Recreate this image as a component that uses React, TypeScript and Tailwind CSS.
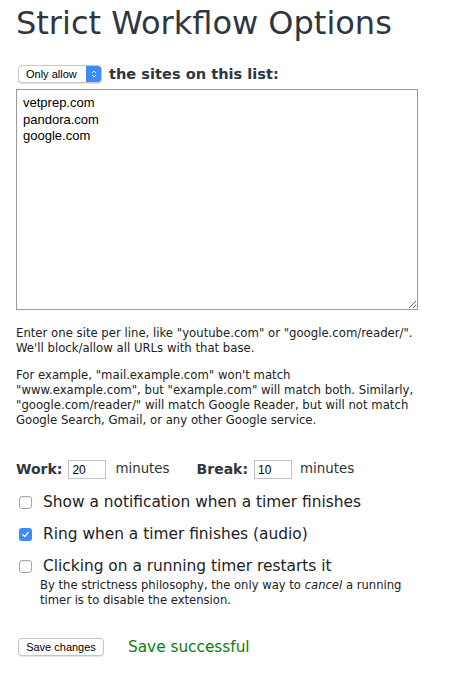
import React from 'react';

const sites = ['vetprep.com', 'pandora.com', 'google.com'];

const Checkbox = ({ checked }: { checked?: boolean }) =>
  checked ? (
    <span className="flex h-[13px] w-[13px] items-center justify-center rounded-[3px] bg-[#3b8cf5]">
      <svg viewBox="0 0 12 12" className="h-[9px] w-[9px]">
        <path d="M2.5 6.3 L5 8.8 L9.6 3.2" fill="none" stroke="#fff" strokeWidth="1.8" strokeLinecap="round" strokeLinejoin="round" />
      </svg>
    </span>
  ) : (
    <span className="block h-[13px] w-[13px] rounded-[3px] border border-[#a9a9a9] bg-white shadow-[inset_0_1px_1px_rgba(0,0,0,0.08)]" />
  );

const NumberBox = ({ value }: { value: string }) => (
  <span className="flex h-[19px] w-[38px] items-center border border-[#c3c3c3] bg-white pl-[3px] font-['Liberation_Sans',sans-serif] text-[12px] text-black">
    {value}
  </span>
);

export default function App() {
  return (
    <div className="min-h-[673px] bg-white px-4 font-['DejaVu_Sans',sans-serif] text-[#222]">
      <h1 className="pt-[3px] text-[32px] leading-[40px] font-normal text-[#2f3640]">
        Strict Workflow Options
      </h1>

      {/* block / allow list */}
      <div className="mt-[22px] flex items-center gap-[7px] pl-[2px]">
        <div className="flex h-[18px] w-[84px] items-center justify-between overflow-hidden rounded-[4px] border border-[#c8c8c8] bg-white shadow-[0_1px_1px_rgba(0,0,0,0.12)]">
          <span className="pl-[7px] font-['Liberation_Sans',sans-serif] text-[11px] text-black">Only allow</span>
          <span className="flex h-full w-[15px] items-center justify-center bg-[#3b8cf5]">
            <svg viewBox="0 0 8 12" className="h-[10px] w-[6px]">
              <path d="M1.5 4.5 L4 2 L6.5 4.5 M1.5 7.5 L4 10 L6.5 7.5" fill="none" stroke="#fff" strokeWidth="1.3" />
            </svg>
          </span>
        </div>
        <span className="text-[14.6px] leading-[18px] font-bold text-[#2f3640]">the sites on this list:</span>
      </div>

      <textarea
        readOnly
        defaultValue={sites.join('\n')}
        className="mt-[6px] block h-[221px] w-[402px] border border-[#9a9a9a] bg-white px-[6px] py-[5px] font-['Liberation_Sans',sans-serif] text-[13px] leading-[16.5px] text-black outline-none"
      />

      <div className="mt-[16px] text-[11.7px] leading-[15px] text-[#222]">
        <p>
          Enter one site per line, like "youtube.com" or "google.com/reader/".
          <br />
          We'll block/allow all URLs with that base.
        </p>
        <p className="mt-[12px]">
          For example, "mail.example.com" won't match
          <br />
          "www.example.com", but "example.com" will match both. Similarly,
          <br />
          "google.com/reader/" will match Google Reader, but will not match
          <br />
          Google Search, Gmail, or any other Google service.
        </p>
      </div>

      {/* timers */}
      <div className="mt-[31px] flex items-center text-[13.4px] text-[#333]">
        <span className="mr-[6px] text-[14px] font-bold text-[#2f3640]">Work:</span>
        <NumberBox value="20" />
        <span className="ml-[9px]">minutes</span>
        <span className="mr-[6px] ml-[27px] text-[14px] font-bold text-[#2f3640]">Break:</span>
        <NumberBox value="10" />
        <span className="ml-[8px]">minutes</span>
      </div>

      <div className="mt-[13px] flex flex-col gap-[14px] text-[15.4px] leading-[18px] text-[#222]">
        <label className="flex items-center gap-[11px] pl-[3px]">
          <Checkbox />
          <span>Show a notification when a timer finishes</span>
        </label>
        <label className="flex items-center gap-[11px] pl-[3px]">
          <Checkbox checked />
          <span>Ring when a timer finishes (audio)</span>
        </label>
        <div>
          <label className="flex items-center gap-[11px] pl-[3px]">
            <Checkbox />
            <span>Clicking on a running timer restarts it</span>
          </label>
          <p className="mt-[3px] pl-[24px] text-[11.6px] leading-[15px] text-[#222]">
            By the strictness philosophy, the only way to <em>cancel</em> a running
            <br />
            timer is to disable the extension.
          </p>
        </div>
      </div>

      <div className="mt-[28px] flex items-center pl-[2px]">
        <button className="flex h-[18px] w-[86px] items-center justify-center rounded-[4px] border border-[#c5c5c5] bg-white font-['Liberation_Sans',sans-serif] text-[11px] text-black shadow-[0_1px_1px_rgba(0,0,0,0.1)]">
          Save changes
        </button>
        <span className="ml-[24px] text-[15.3px] text-[#0a7d0a]">Save successful</span>
      </div>
    </div>
  );
}
